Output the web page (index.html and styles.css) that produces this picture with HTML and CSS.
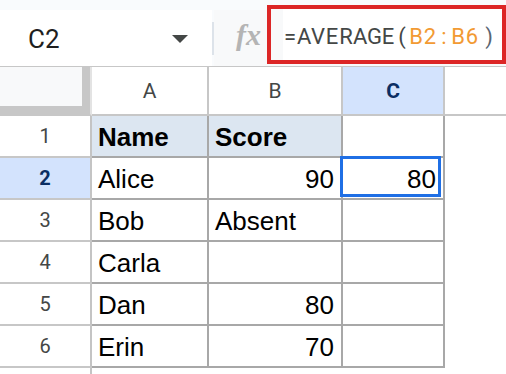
FILE: index.html
```html
<!DOCTYPE html>
<html>
<head>
<meta charset="utf-8">
<link rel="stylesheet" href="styles.css">
</head>
<body>
<div class="topbar">
  <div class="namebox">
    <span class="ref">C2</span>
    <span class="caret"></span>
  </div>
  <div class="divider"></div>
  <div class="fxarea">
    <span class="fx">fx</span>
    <div class="formula"><span class="ch">=</span><span class="ch">A</span><span class="ch">V</span><span class="ch">E</span><span class="ch">R</span><span class="ch">A</span><span class="ch">G</span><span class="ch">E</span><span class="ch">(</span><span class="ch rng">B</span><span class="ch rng">2</span><span class="ch rng">:</span><span class="ch rng">B</span><span class="ch rng">6</span><span class="ch close">)</span></div>
  </div>
</div>
<div class="sheet">
  <div class="corner"><div class="corner-in"></div></div>
  <div class="colhead">A</div>
  <div class="colhead">B</div>
  <div class="colhead sel">C</div>
  <div class="colhead last"></div>

  <div class="rowhead">1</div>
  <div class="cell hdr">Name</div>
  <div class="cell hdr">Score</div>
  <div class="cell"></div>
  <div class="cell out"></div>

  <div class="rowhead sel">2</div>
  <div class="cell">Alice</div>
  <div class="cell num">90</div>
  <div class="cell num active">80</div>
  <div class="cell out"></div>

  <div class="rowhead">3</div>
  <div class="cell">Bob</div>
  <div class="cell">Absent</div>
  <div class="cell"></div>
  <div class="cell out"></div>

  <div class="rowhead">4</div>
  <div class="cell">Carla</div>
  <div class="cell"></div>
  <div class="cell"></div>
  <div class="cell out"></div>

  <div class="rowhead">5</div>
  <div class="cell">Dan</div>
  <div class="cell num">80</div>
  <div class="cell"></div>
  <div class="cell out"></div>

  <div class="rowhead">6</div>
  <div class="cell">Erin</div>
  <div class="cell num">70</div>
  <div class="cell"></div>
  <div class="cell out"></div>

  <div class="rowhead tail"></div>
  <div class="cell tail"></div>
  <div class="cell tail"></div>
  <div class="cell tail"></div>
  <div class="cell out tail"></div>
</div>
</body>
</html>
```

FILE: styles.css
```css
* { box-sizing: border-box; }
html, body {
  margin: 0;
  padding: 0;
  background: #ffffff;
  width: 506px;
  height: 374px;
  overflow: hidden;
}
body {
  font-family: "Liberation Sans", Arial, sans-serif;
}

.topbar {
  display: flex;
  height: 67px;
  background: #f9fbfd;
  border-bottom: 1px solid #c7c7c7;
}
.namebox {
  width: 212px;
  margin-top: 10px;
  height: 56px;
  background: #ffffff;
  display: flex;
  align-items: center;
  padding-left: 28px;
  padding-right: 24px;
}
.ref {
  font-family: Roboto, "Liberation Sans", sans-serif;
  font-size: 26px;
  color: #1f1f1f;
  padding-top: 2px;
}
.caret {
  margin-left: auto;
  width: 0;
  height: 0;
  border-left: 8px solid transparent;
  border-right: 8px solid transparent;
  border-top: 8px solid #444746;
  margin-top: 2px;
}
.divider {
  width: 2px;
  height: 33px;
  align-self: center;
  margin-top: 10px;
  background: #dde3ea;
}
.fxarea {
  flex: 1;
  display: flex;
  background: #f8f9fa;
  margin-top: 10px;
  align-items: center;
}
.fx {
  font-family: "Liberation Serif", serif;
  font-style: italic;
  font-weight: bold;
  font-size: 30px;
  color: #b4b4b4;
  margin-left: 22px;
  width: 31px;
  margin-top: -6px;
}
.formula {
  align-self: flex-start;
  margin-top: -5px;
  height: 59px;
  flex: 1;
  border: 4px solid #dc2626;
  background: linear-gradient(to right, #f8f9fa 12px, #ffffff 12px);
  display: flex;
  align-items: center;
  padding-left: 12px;
  padding-top: 3px;
  font-family: Roboto, "Liberation Sans", sans-serif;
  font-size: 22px;
  color: #444746;
  white-space: nowrap;
}
.ch {
  display: inline-block;
  width: 14px;
  text-align: center;
}
.rng {
  color: #f29a33;
}
.close {
  color: #5a6572;
  margin-left: 3px;
}

.sheet {
  display: grid;
  grid-template-columns: 92px 117px 134px 102px 1fr;
  grid-template-rows: 49px repeat(6, 42px) 20px;
}
.corner {
  background: #c7c7c7;
  border-right: 2px solid #e3e3e3;
  border-bottom: 2px solid #c7c7c7;
}
.corner-in {
  width: 82px;
  height: 39px;
  background: #f8f9fa;
}
.colhead {
  display: flex;
  align-items: center;
  justify-content: center;
  font-family: Roboto, "Liberation Sans", sans-serif;
  font-size: 21px;
  color: #444746;
  border-right: 2px solid #c7c7c7;
  border-bottom: 2px solid #c7c7c7;
  background: #ffffff;
}
.colhead.sel {
  background: #d3e3fd;
  color: #0b2e63;
  font-weight: bold;
}
.colhead.last {
  border-right: none;
}
.rowhead {
  display: flex;
  align-items: center;
  justify-content: center;
  font-family: Roboto, "Liberation Sans", sans-serif;
  font-size: 20px;
  color: #444746;
  border-right: 2px solid #c4c4c4;
  border-bottom: 2px solid #c7c7c7;
  background: #ffffff;
}
.rowhead.sel {
  background: #d3e3fd;
  color: #0b2e63;
  font-weight: bold;
}
.rowhead.tail {
  border-bottom: none;
}
.cell {
  display: flex;
  align-items: flex-end;
  padding: 0 7px 5px 6px;
  font-size: 26px;
  line-height: 28px;
  color: #000000;
  border-right: 2px solid #a8a8a8;
  border-bottom: 2px solid #a8a8a8;
  background: #ffffff;
}
.cell.hdr {
  background: #dce6f1;
  font-weight: bold;
}
.cell.num {
  justify-content: flex-end;
}
.cell.out {
  border: none;
}
.cell.tail {
  border: none;
}
.cell.active {
  position: relative;
}
.cell.active::after {
  content: "";
  position: absolute;
  left: -3px;
  top: -2px;
  right: 2px;
  bottom: 1px;
  border: 3px solid #1f6fe5;
}
```
